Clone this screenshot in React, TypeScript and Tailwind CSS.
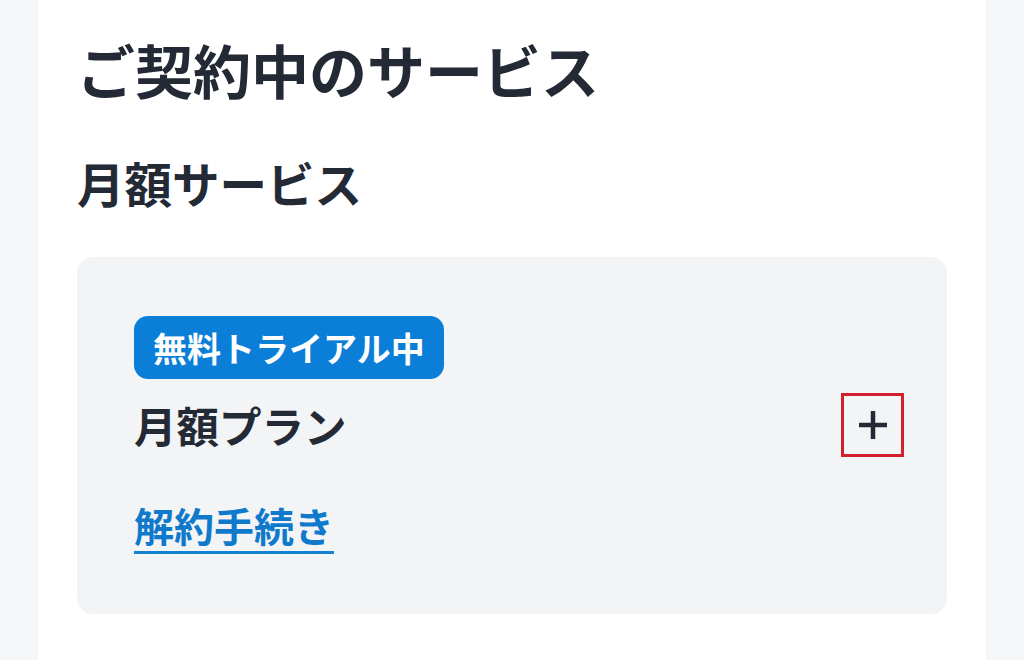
const jp = { fontFamily: '"Noto Sans CJK JP", "Noto Sans", sans-serif' }

function PlusIcon() {
  return (
    <svg width="30" height="30" viewBox="0 0 30 30" fill="none" stroke="currentColor" strokeWidth="4.5" strokeLinecap="butt">
      <path d="M15 1v28M1 15h28" />
    </svg>
  )
}

export default function App() {
  return (
    <div className="min-h-screen bg-[#f6f7f9] flex justify-center" style={jp}>
      <div className="w-[948px] min-h-[660px] bg-white px-[39px] pt-[29px]">
        <h1 className="text-[58px] leading-[80px] font-bold text-[#232a35]">ご契約中のサービス</h1>
        <h2 className="mt-[42px] text-[47.5px] leading-[64px] font-bold text-[#232a35]">月額サービス</h2>

        <div className="mt-[42px] rounded-[16px] bg-[#f3f4f6] pl-[57px] pr-[43px] pt-[59px] pb-[60px]">
          <span className="inline-flex items-center h-[63px] px-[19px] rounded-[14px] bg-[#0b7fd8] text-white text-[34px] font-bold leading-none">
            無料トライアル中
          </span>

          <div className="mt-[14px] flex items-center justify-between">
            <span className="text-[42.5px] leading-[64px] font-bold text-[#232a35]">月額プラン</span>
            <button className="w-[63px] h-[64px] border-[3px] border-[#d4202e] flex items-center justify-center text-[#232a35]">
              <PlusIcon />
            </button>
          </div>

          <a
            href="#"
            className="mt-[42px] inline-block text-[40px] leading-[52px] font-bold text-[#0f7acc] border-b-[3px] border-[#1581d3]"
          >
            解約手続き
          </a>
        </div>
      </div>
    </div>
  )
}
